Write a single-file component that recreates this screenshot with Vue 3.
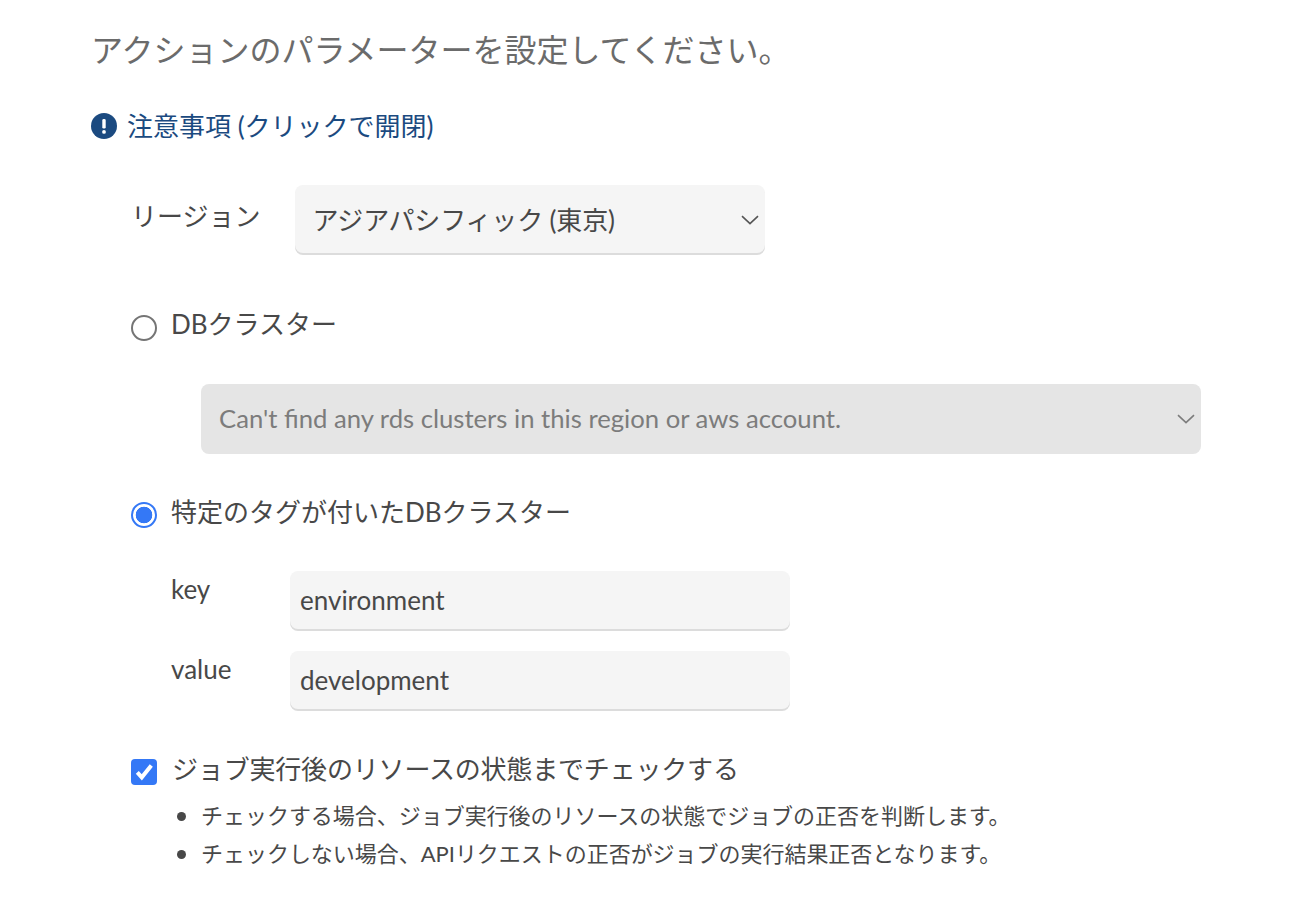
<script setup>
import { ref } from 'vue'
const target = ref('tag')
const tagKey = ref('environment')
const tagValue = ref('development')
const checkState = ref(true)
const notes = [
  'チェックする場合、ジョブ実行後のリソースの状態でジョブの正否を判断します。',
  'チェックしない場合、APIリクエストの正否がジョブの実行結果正否となります。'
]
</script>

<template>
  <main class="page">
    <h2 class="heading">アクションのパラメーターを設定してください。</h2>

    <a class="notice">
      <svg class="notice-icon" viewBox="0 0 26 26" aria-hidden="true">
        <circle cx="13" cy="13" r="13" fill="#1b4a80" />
        <rect x="11.3" y="6" width="3.4" height="9.6" rx="1.4" fill="#fff" />
        <circle cx="13" cy="18.9" r="1.9" fill="#fff" />
      </svg>
      <span>注意事項 (クリックで開閉)</span>
    </a>

    <div class="form">
      <div class="region-row">
        <span class="region-label">リージョン</span>
        <div class="select region-select">
          <span class="region-value">アジアパシフィック (東京)</span>
          <svg class="chevron" viewBox="0 0 18 10" aria-hidden="true">
            <path d="M1 1.2 L9 8.6 L17 1.2" fill="none" stroke="#555" stroke-width="1.6" />
          </svg>
        </div>
      </div>

      <label class="radio-row first-radio">
        <input v-model="target" class="radio" type="radio" value="cluster" />
        <span>DBクラスター</span>
      </label>

      <div class="select cluster-select">
        <span>Can't find any rds clusters in this region or aws account.</span>
        <svg class="chevron" viewBox="0 0 18 10" aria-hidden="true">
          <path d="M1 1.2 L9 8.6 L17 1.2" fill="none" stroke="#7c7c7c" stroke-width="1.6" />
        </svg>
      </div>

      <label class="radio-row second-radio">
        <input v-model="target" class="radio" type="radio" value="tag" />
        <span>特定のタグが付いたDBクラスター</span>
      </label>

      <div class="tags">
        <div class="tag-row">
          <span class="tag-label">key</span>
          <input v-model="tagKey" class="text-input" type="text" />
        </div>
        <div class="tag-row">
          <span class="tag-label">value</span>
          <input v-model="tagValue" class="text-input" type="text" />
        </div>
      </div>

      <label class="check-row">
        <input v-model="checkState" class="check" type="checkbox" />
        <svg class="check-mark" viewBox="0 0 26 26" aria-hidden="true">
          <path d="M6.3 13.3 L10.8 18.3 L20.3 6.5" fill="none" stroke="#fff" stroke-width="4" />
        </svg>
        <span class="check-text">ジョブ実行後のリソースの状態までチェックする</span>
      </label>

      <ul class="notes">
        <li v-for="note in notes" :key="note">{{ note }}</li>
      </ul>
    </div>
  </main>
</template>

<style>
html, body { margin: 0; background: #fff; }
</style>

<style scoped>
.page {
  box-sizing: border-box;
  width: 1294px;
  height: 908px;
  overflow: hidden;
  padding: 28px 93px 0 91px;
  font-family: Lato, "Noto Sans CJK JP", sans-serif;
  color: #484848;
  font-size: 26px;
}
.heading {
  margin: 0;
  font-size: 32px;
  line-height: 44px;
  font-weight: 400;
  color: #6b6b6b;
}
.notice {
  display: flex;
  align-items: center;
  gap: 10px;
  margin-top: 32px;
  height: 44px;
  color: #1b4a80;
  line-height: 44px;
}
.notice-icon { width: 26px; height: 26px; flex: none; }
.form { padding-left: 40px; }
.region-row { display: flex; align-items: flex-start; gap: 35px; margin-top: 37px; }
.region-label { line-height: 62px; }
.select {
  box-sizing: border-box;
  position: relative;
  display: flex;
  align-items: center;
  border-radius: 8px;
  white-space: nowrap;
}
.region-select {
  width: 470px;
  height: 68px;
  padding: 0 0 2px 18px;
  background: #f5f5f5;
  box-shadow: 0 2px 0 #dcdcdc;
}
.region-value { margin-left: -1px; letter-spacing: -0.15px; }
.chevron { position: absolute; right: 6px; top: 30px; width: 18px; height: 10px; }
.cluster-select {
  width: 1000px;
  height: 70px;
  margin: 40px 0 0 70px;
  padding: 0 0 2px 18px;
  background: #e5e5e5;
  color: #7c7c7c;
  font-size: 25.67px;
}
.radio-row { display: flex; align-items: center; gap: 14px; line-height: 40px; height: 40px; }
.first-radio { margin-top: 51px; }
.second-radio { margin-top: 38px; }
.radio {
  appearance: none;
  box-sizing: border-box;
  width: 26px;
  height: 26px;
  margin: 6px 0 0;
  flex: none;
  border: 2px solid #757575;
  border-radius: 50%;
  background: #fff;
}
.first-radio .radio { margin-top: 8px; }
.radio:checked {
  border-color: #3478f6;
  background: radial-gradient(circle, #3478f6 0 8px, #fff 8.6px);
}
.tags { display: flex; flex-direction: column; gap: 22px; margin: 39px 0 0 40px; }
.tag-row { display: flex; align-items: flex-start; }
.tag-label { width: 119px; line-height: 36px; }
.text-input {
  box-sizing: border-box;
  width: 500px;
  height: 58px;
  padding: 0 10px;
  border: 0;
  border-radius: 8px;
  outline: 0;
  background: #f5f5f5;
  box-shadow: 0 2px 0 #dcdcdc;
  font: inherit;
  color: inherit;
}
.check-row { position: relative; display: flex; align-items: center; gap: 15px; margin-top: 38px; height: 40px; }
.check {
  appearance: none;
  width: 26px;
  height: 26px;
  margin: 10px 0 0;
  flex: none;
  border-radius: 4px;
  background: #3478f6;
}
.check-mark { position: absolute; left: 0; top: 12px; width: 26px; height: 26px; }
.check-text { letter-spacing: -0.18px; }
.notes {
  margin: 10px 0 0;
  padding: 0 0 0 70px;
  font-size: 22px;
  line-height: 38px;
  list-style: none;
  letter-spacing: -0.03px;
}
.notes li { position: relative; }
.notes li::before {
  content: "";
  position: absolute;
  left: -24px;
  top: 15px;
  width: 9px;
  height: 9px;
  border-radius: 50%;
  background: #484848;
}
</style>
